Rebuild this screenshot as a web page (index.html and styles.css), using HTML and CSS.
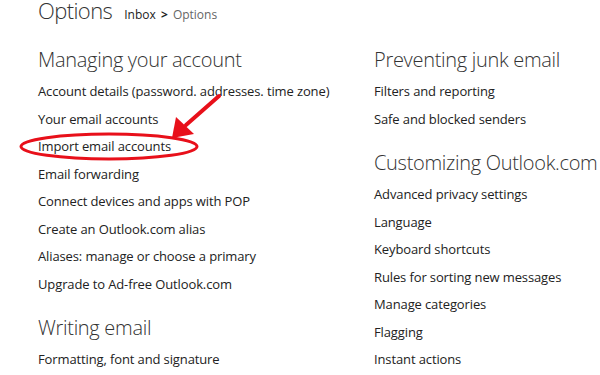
FILE: index.html
```html
<!DOCTYPE html>
<html>
<head>
  <meta charset="utf-8">
  <title>Options</title>
  <link rel="stylesheet" href="styles.css">
</head>
<body>
  <div class="top">
    <h1 class="title">Options</h1>
    <div class="crumbs"><span class="crumb-link">Inbox</span> <span class="sep">&gt;</span> <span class="crumb-here">Options</span></div>
  </div>

  <div class="columns">
    <div class="col">
      <div class="section">
        <h2>Managing your account</h2>
        <ul>
          <li>Account details (password. addresses. time zone)</li>
          <li>Your email accounts</li>
          <li>Import email accounts</li>
          <li>Email forwarding</li>
          <li>Connect devices and apps with POP</li>
          <li>Create an Outlook.com alias</li>
          <li>Aliases: manage or choose a primary</li>
          <li>Upgrade to Ad-free Outlook.com</li>
        </ul>
      </div>
      <div class="section">
        <h2>Writing email</h2>
        <ul>
          <li>Formatting, font and signature</li>
        </ul>
      </div>
    </div>

    <div class="col">
      <div class="section">
        <h2>Preventing junk email</h2>
        <ul>
          <li>Filters and reporting</li>
          <li>Safe and blocked senders</li>
        </ul>
      </div>
      <div class="section">
        <h2>Customizing Outlook.com</h2>
        <ul>
          <li>Advanced privacy settings</li>
          <li>Language</li>
          <li>Keyboard shortcuts</li>
          <li>Rules for sorting new messages</li>
          <li>Manage categories</li>
          <li>Flagging</li>
          <li>Instant actions</li>
        </ul>
      </div>
    </div>
  </div>

  <!-- red markup drawn over the page -->
  <svg class="markup" width="600" height="375" viewBox="0 0 600 375">
    <ellipse cx="109" cy="146.5" rx="88" ry="12.5" fill="none" stroke="#e8101a" stroke-width="3"/>
    <line x1="219" y1="96" x2="186" y2="125" stroke="#e8101a" stroke-width="4" stroke-linecap="round"/>
    <polygon points="172,138 176,117 194,134" fill="#e8101a"/>
  </svg>
</body>
</html>
```

FILE: styles.css
```css
body {
    margin: 0 ;
    background-color: white ;
    font-family: "Open Sans", "Noto Sans", sans-serif ;
    color: #222 ;
}
.top {
    display: flex ;
    align-items: baseline ;
    height: 30px ;
    padding-left: 38px ;
    margin-top: -3px ;
}
.title {
    margin: 0 ;
    font-size: 22px ;
    line-height: 26px ;
    font-weight: 300 ;
    letter-spacing: -0.6px ;
    color: #333 ;
}
.crumbs {
    margin-left: 12px ;
    font-size: 12px ;
    color: #222 ;
}
.sep {
    font-weight: 700 ;
    margin: 0 2px ;
}
.crumb-here {
    color: #666 ;
}
.columns {
    display: grid ;
    grid-template-columns: 336px auto ;
    padding-left: 38px ;
    margin-top: 18px ;
}
.section {
    margin-bottom: 15px ;
}
h2 {
    margin: 0 0 3px 0 ;
    font-size: 20px ;
    line-height: 30px ;
    font-weight: 300 ;
    letter-spacing: -0.3px ;
    color: #333 ;
    white-space: nowrap ;
}
ul {
    list-style: none ;
    margin: 0 ;
    padding: 0 ;
}
li {
    font-size: 13px ;
    line-height: 27.5px ;
    letter-spacing: -0.12px ;
    white-space: nowrap ;
}
.markup {
    position: absolute ;
    left: 0 ;
    top: 0 ;
    pointer-events: none ;
}
```
